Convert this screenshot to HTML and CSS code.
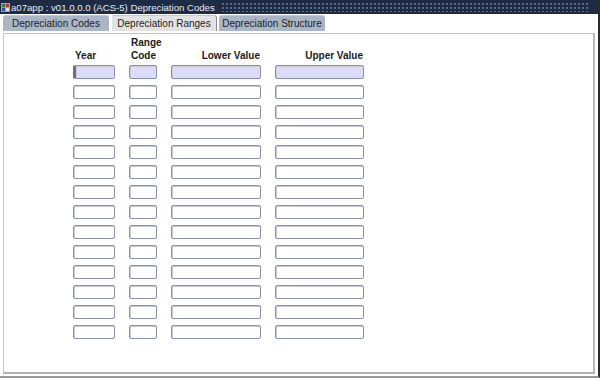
FILE: index.html
```html
<!DOCTYPE html>
<html>
  <head>
    <meta charset="UTF-8">
    <link rel="stylesheet" href="styles.css">
  </head>
  <body>
    <div class="window">
      <div class="titlebar">
        <svg class="appicon" width="9" height="11" viewBox="0 0 9 11">
          <rect x="0" y="1" width="9" height="9" fill="#c8a040"/>
          <rect x="1" y="2" width="3" height="3" fill="#3a7a3a"/>
          <rect x="5" y="2" width="3" height="3" fill="#c03030"/>
          <rect x="1" y="6" width="3" height="3" fill="#3050b0"/>
          <rect x="5" y="6" width="3" height="3" fill="#e0e0e0"/>
        </svg>
        <span class="title">a07app : v01.0.0.0 (ACS-5) Depreciation Codes</span>
        <div class="dots"></div>
      </div>

      <ul class="tabs">
        <li class="tab">Depreciation Codes</li>
        <li class="tab active">Depreciation Ranges</li>
        <li class="tab">Depreciation Structure</li>
      </ul>

      <div class="panel">
        <div class="grid" id="grid">
          <div class="head">Year</div>
          <div class="head">Range<br>Code</div>
          <div class="head right">Lower Value</div>
          <div class="head right">Upper Value</div>
        </div>
      </div>
    </div>
    <script>
      var grid = document.getElementById('grid');
      for (var i = 0; i < 14; i++) {
        for (var c = 0; c < 4; c++) {
          var f = document.createElement('div');
          f.className = 'field';
          if (i == 0) f.className += ' current';
          if (i == 0 && c == 0) f.className += ' cursor';
          grid.appendChild(f);
        }
      }
    </script>
  </body>
</html>
```

FILE: styles.css
```css
body {
  margin: 0;
  font-family: "Liberation Sans", Arial, sans-serif;
  background: #ffffff;
}

.window {
  width: 598px;
  height: 376px;
  border-right: 2px solid #2a2a2a;
  border-bottom: 2px solid #9a9a9a;
  display: flex;
  flex-direction: column;
}

.titlebar {
  height: 14px;
  background: #1e2b45;
  display: flex;
  align-items: center;
  color: #e8ecf4;
  font-size: 9.6px;
}

.appicon {
  margin: 0 1px 0 1px;
}

.title {
  white-space: nowrap;
  margin-right: 6px;
}

.dots {
  flex: 1;
  height: 10px;
  margin-right: 8px;
  background-image: radial-gradient(circle, #5d6a84 0.7px, transparent 1px);
  background-size: 4px 4px;
}

.tabs {
  list-style-type: none;
  margin: 0;
  padding: 1px 0 0 3px;
  display: flex;
  gap: 2px;
  height: 16px;
}

.tab {
  background: #aab6c6;
  color: #222;
  font-size: 10px;
  line-height: 15px;
  white-space: nowrap;
  width: 106px;
  box-sizing: border-box;
  text-align: center;
  border-radius: 3px 3px 0 0;
  border-top: 1px solid #c0c8d4;
}

.tab.active {
  background: #e2e2e2;
  border-left: 1px solid #ffffff;
  border-right: 1px solid #8a8a8a;
}

.panel {
  margin: 2px 3px 2px 3px;
  flex: 1;
  border: 1px solid #c4c4c4;
  border-bottom: 2px solid #b0b0b0;
  border-right: 2px solid #b8b8b8;
  background: #ffffff;
}

.grid {
  display: grid;
  grid-template-columns: 42px 28px 90px 89px;
  column-gap: 14px;
  row-gap: 6px;
  padding: 2px 0 0 69px;
}

.head {
  font-size: 10px;
  font-weight: bold;
  color: #1a1a1a;
  line-height: 13px;
  align-self: end;
  padding-left: 2px;
  margin-bottom: -3px;
}

.head.right {
  text-align: right;
  padding-right: 1px;
}

.field {
  height: 14px;
  box-sizing: border-box;
  border: 1px solid #8890a4;
  border-radius: 2px;
  background: #ffffff;
  box-shadow: inset 1px 1px 0 #c8ccd8;
}

.field.current {
  background: #dcdcfa;
}

.field.cursor {
  border-left: 3px solid #6a7088;
}
```
